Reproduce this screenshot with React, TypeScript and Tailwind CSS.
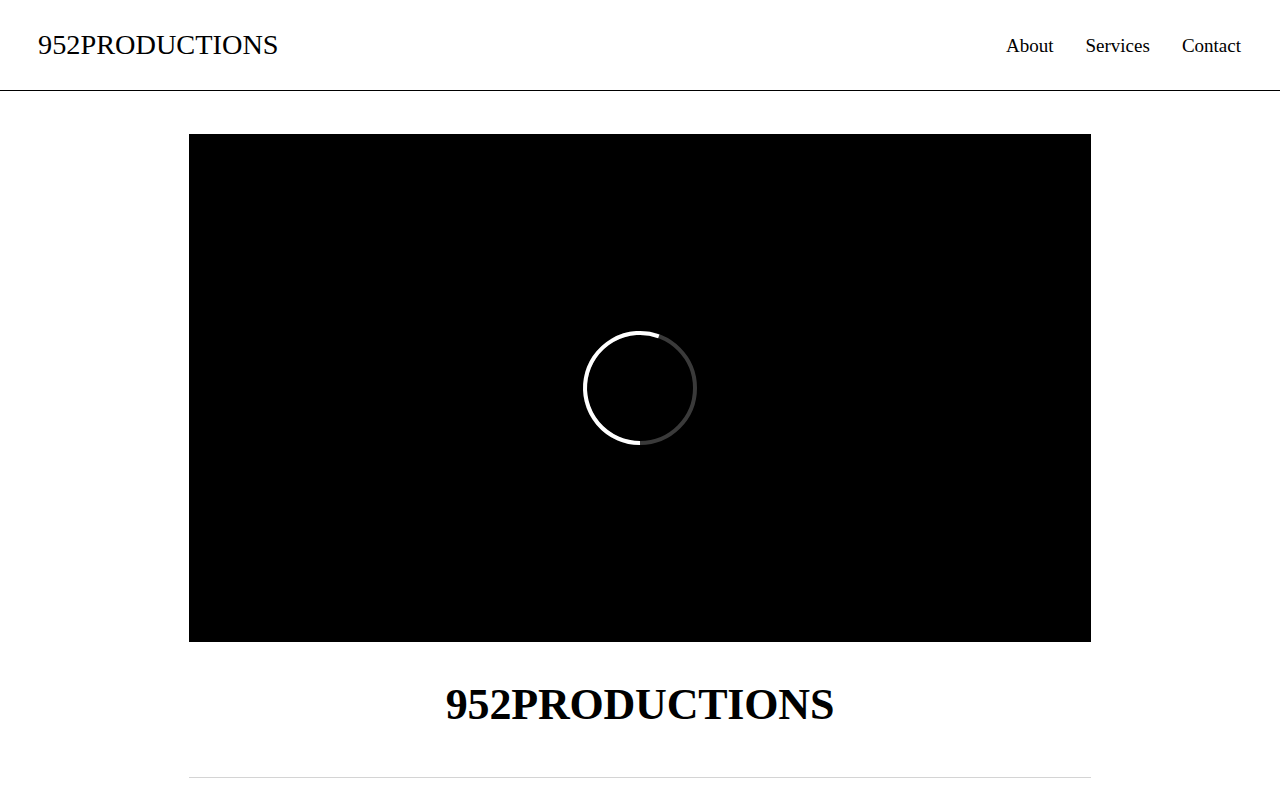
export default function App() {
  const links = ["About", "Services", "Contact"];

  return (
    <div className="min-h-screen bg-white text-black font-['Liberation_Serif',serif]">
      {/* Header */}
      <header className="flex h-[91px] items-center justify-between border-b border-black px-[38px]">
        <span className="text-[28.3px] leading-none">952PRODUCTIONS</span>
        <nav className="flex items-center gap-[32px] pr-[1px]">
          {links.map((link) => (
            <a key={link} href="#" className="text-[19px] leading-none">
              {link}
            </a>
          ))}
        </nav>
      </header>

      {/* Video */}
      <main className="mx-auto w-[902px] pt-[43px]">
        <div className="flex h-[508px] w-full items-center justify-center bg-black">
          <svg width="120" height="120" viewBox="0 0 120 120">
            <circle cx="60" cy="60" r="55" fill="none" stroke="#3a3a3a" strokeWidth="4" />
            <path
              d="M60 115 A55 55 0 1 1 78.8 8.3"
              fill="none"
              stroke="#ffffff"
              strokeWidth="4"
            />
          </svg>
        </div>

        <h1 className="mt-[38px] mb-[46px] text-center text-[44px] font-bold leading-[1.15] tracking-[-0.2px]">
          952PRODUCTIONS
        </h1>
        <hr className="border-t border-[#d4d4d4]" />
      </main>
    </div>
  );
}
